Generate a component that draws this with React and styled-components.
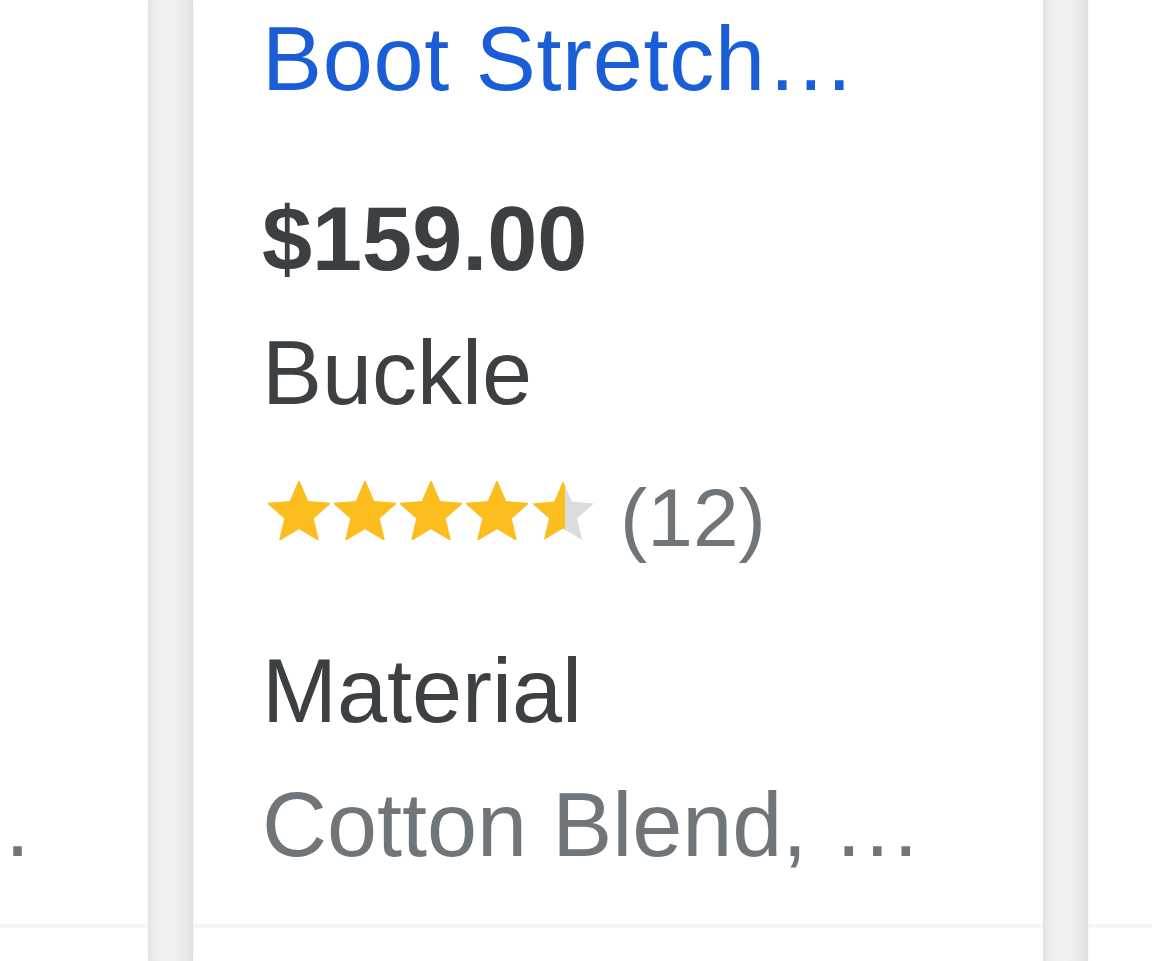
import React from "react";
import styled, { createGlobalStyle } from "styled-components";

const GlobalStyle = createGlobalStyle`
  html, body { margin: 0; padding: 0; background: #ffffff; }
  body { font-family: "Liberation Sans", Arial, Helvetica, sans-serif; }
`;

const Strip = styled.div`
  display: flex;
  align-items: flex-start;
  height: 961px;
  overflow: hidden;
  background: #ffffff;
`;

const Card = styled.div`
  flex: 0 0 ${(p) => p.$width}px;
  width: ${(p) => p.$width}px;
  height: 928px;
  box-sizing: border-box;
  border-bottom: 4px solid #f6f6f6;
  overflow: hidden;
  display: flex;
  flex-direction: column;
  justify-content: ${(p) => (p.$bottom ? "flex-end" : "flex-start")};
  padding: ${(p) => p.$pad || "0"};
  font-size: 90px;
`;

const Divider = styled.div`
  flex: 0 0 45px;
  align-self: stretch;
  background: linear-gradient(
    90deg,
    #e2e2e4 0%,
    #ececee 12%,
    #f1f1f3 35%,
    #efeff1 60%,
    #e8e8ea 85%,
    #dfdfe1 100%
  );
  box-shadow: 2px 0 3px rgba(0, 0, 0, 0.025), -2px 0 3px rgba(0, 0, 0, 0.02);
`;

const Title = styled.div`
  color: #1a5dd6;
  line-height: 118px;
  letter-spacing: 0.7px;
  white-space: nowrap;
  margin-bottom: 54px;
`;

const Price = styled.div`
  color: #3c4043;
  font-weight: 700;
  line-height: 134px;
  white-space: nowrap;
`;

const Line = styled.div`
  color: ${(p) => (p.$muted ? "#70757a" : "#3c4043")};
  line-height: 134px;
  white-space: nowrap;
  margin-top: ${(p) => p.$gap || 0}px;
`;

const EdgeLine = styled.div`
  display: flex;
  justify-content: flex-end;
  color: #70757a;
  line-height: 134px;
  white-space: nowrap;
`;

const RatingRow = styled.div`
  display: flex;
  align-items: center;
  height: 140px;
`;

const Stars = styled.div`
  display: flex;
  gap: 4px;
  margin-left: 6px;
`;

const Count = styled.span`
  color: #70757a;
  font-size: 82px;
  line-height: 140px;
  padding-top: 16px;
  margin-left: 26px;
`;

const STAR =
  "M12 17.27L18.18 21l-1.64-7.03L22 9.24l-7.19-.61L12 2 9.19 8.63 2 9.24l5.46 4.73L5.82 21z";

function Star({ fill, id }) {
  return (
    <svg width="62" height="59" viewBox="2 2 20 19" aria-hidden="true">
      <defs>
        <linearGradient id={id} x1="2" x2="22" y1="0" y2="0" gradientUnits="userSpaceOnUse">
          <stop offset={fill} stopColor="#fcbd1f" />
          <stop offset={fill} stopColor="#dadce0" />
        </linearGradient>
      </defs>
      <path d={STAR} fill={`url(#${id})`} stroke={fill > 0.99 ? "#fcbd1f" : "none"} strokeWidth="0.4" strokeLinejoin="round" />
    </svg>
  );
}

function Rating({ value, count }) {
  const stars = [0, 1, 2, 3, 4].map((i) => {
    const f = Math.max(0, Math.min(1, value - i));
    return <Star key={i} id={`star-${i}`} fill={f === 1 ? 1 : f === 0 ? 0 : 0.54} />;
  });
  return (
    <RatingRow>
      <Stars>{stars}</Stars>
      <Count>({count})</Count>
    </RatingRow>
  );
}

export default function App() {
  return (
    <>
      <GlobalStyle />
      <Strip>
        <Card $width={148} $bottom $pad="0 114px 32px 0">
          <EdgeLine>Faux Leather, …</EdgeLine>
        </Card>
        <Divider />
        <Card $width={850} $pad="0 0 0 69px">
          <Title>Boot Stretch…</Title>
          <Price>$159.00</Price>
          <Line>Buckle</Line>
          <Rating value={4.5} count={12} />
          <Line $gap={44}>Material</Line>
          <Line $muted>Cotton Blend, …</Line>
        </Card>
        <Divider />
        <Card $width={64} />
      </Strip>
    </>
  );
}
